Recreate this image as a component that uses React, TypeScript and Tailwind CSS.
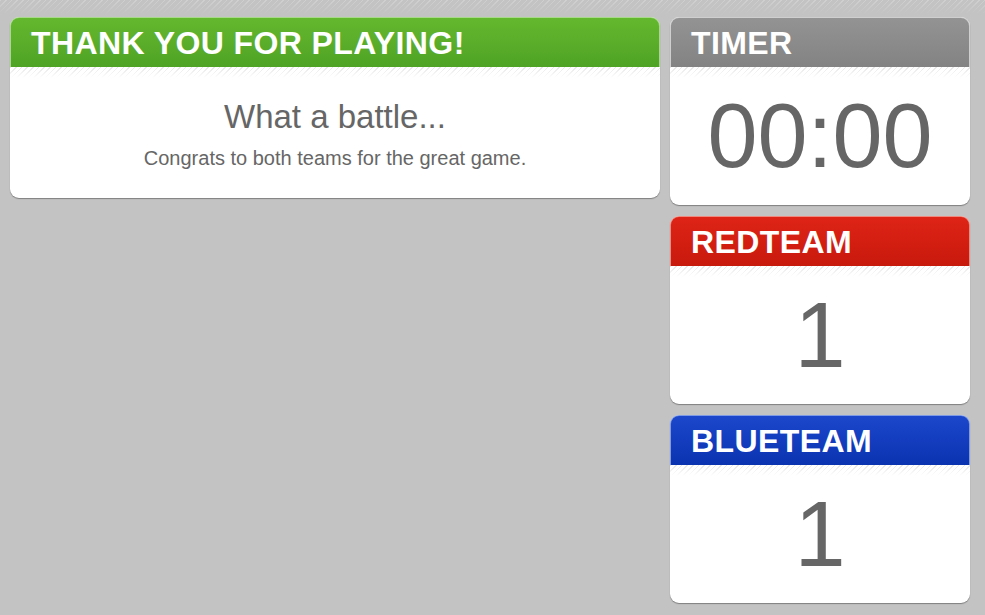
const TEAMS = [
    { name: "REDTEAM", score: 1, header: "bg-[linear-gradient(to_bottom,#de2416,#c8190d)] border-[#ee8a80]" },
    { name: "BLUETEAM", score: 1, header: "bg-[linear-gradient(to_bottom,#1c47cc,#0a33b0)] border-[#7f9be6]" },
];

// thin hatched strip that sits under every panel header
function Hatch() {
    return (
        <div className="h-[11px] bg-[linear-gradient(to_bottom,rgba(255,255,255,0)_0%,#fff_100%),repeating-linear-gradient(135deg,#e6e6e6_0_1px,#fff_1px_4px)]" />
    );
}

function Panel({
    title,
    headerClass,
    className = "",
    children,
}: {
    title: string;
    headerClass: string;
    className?: string;
    children: React.ReactNode;
}) {
    return (
        <div className={`flex flex-col bg-white rounded-[9px] shadow-[0_1px_1px_rgba(0,0,0,0.35)] ${className}`}>
            <div className={`h-[50px] flex items-center px-[20px] rounded-t-[9px] border-t border-x ${headerClass}`}>
                <h2 className="text-[32px] leading-none font-bold text-white tracking-[0.4px]">{title}</h2>
            </div>
            <Hatch />
            {children}
        </div>
    );
}

export default function App() {
    return (
        <div
            className="min-h-screen w-full bg-[#c3c3c3] bg-[linear-gradient(to_bottom,rgba(195,195,195,0)_0px,#c3c3c3_14px),repeating-linear-gradient(135deg,#d0d0d0_0_1px,#c3c3c3_1px_4px)]"
            style={{ fontFamily: '"Liberation Sans", Arial, sans-serif' }}
        >
            <div className="flex items-start gap-[10px] pt-[17px] pl-[10px] pr-[15px]">
                {/* Game over message */}
                <Panel
                    title="THANK YOU FOR PLAYING!"
                    headerClass="bg-[linear-gradient(to_bottom,#64b82e,#4fa325)] border-[#a8d88a]"
                    className="w-[650px] h-[181px]"
                >
                    <div className="flex flex-col items-center pt-[22px] text-[#666]">
                        <p className="text-[33px] leading-none">What a battle...</p>
                        <p className="text-[20px] leading-none mt-[15px]">Congrats to both teams for the great game.</p>
                    </div>
                </Panel>

                {/* Timer and scores */}
                <div className="w-[300px] flex flex-col gap-[11px]">
                    <Panel
                        title="TIMER"
                        headerClass="bg-[linear-gradient(to_bottom,#939393,#838383)] border-[#cfcfcf]"
                        className="h-[188px]"
                    >
                        <div className="flex-1 flex items-center justify-center pb-[11px] text-[#666] text-[90px] leading-none">
                            00:00
                        </div>
                    </Panel>
                    {TEAMS.map((team) => (
                        <Panel key={team.name} title={team.name} headerClass={team.header} className="h-[188px]">
                            <div className="flex-1 flex items-center justify-center pb-[11px] text-[#666] text-[92px] leading-none">
                                {team.score}
                            </div>
                        </Panel>
                    ))}
                </div>
            </div>
        </div>
    );
}
